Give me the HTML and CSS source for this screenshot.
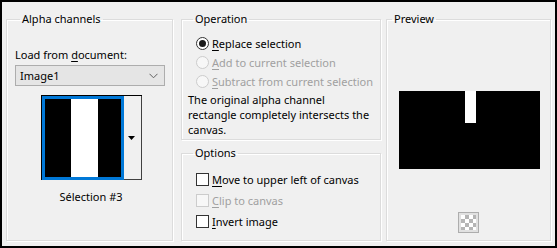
FILE: index.html
```html
<!DOCTYPE html>
<html>
<head>
<meta charset="utf-8">
<link rel="stylesheet" href="styles.css">
</head>
<body>
<div class="dialog">
  <fieldset class="group col1">
    <legend>Alpha channels</legend>
    <div class="label">Load from <u>d</u>ocument:</div>
    <div class="select">
      <span>Image1</span>
      <svg class="chev" width="9" height="6" viewBox="0 0 9 6"><path d="M0.5 0.8 L4.5 4.8 L8.5 0.8" fill="none" stroke="#606060" stroke-width="1"/></svg>
    </div>
    <div class="thumbwrap">
      <div class="thumb">
        <div class="thumbframe"><div class="stripe"></div></div>
        <div class="thumbbtn"><svg width="7" height="4" viewBox="0 0 7 4"><path d="M0 0 H7 L3.5 4 Z" fill="#000"/></svg></div>
      </div>
    </div>
    <div class="caption">Sélection #3</div>
  </fieldset>

  <div class="col2">
    <fieldset class="group op">
      <legend>Operation</legend>
      <div class="radios">
        <div class="row"><span class="radio checked"></span><span><u>R</u>eplace selection</span></div>
        <div class="row dis"><span class="radio"></span><span><u>A</u>dd to current selection</span></div>
        <div class="row dis"><span class="radio"></span><span><u>S</u>ubtract from current selection</span></div>
      </div>
      <div class="desc">The original alpha channel<br>rectangle completely intersects the<br>canvas.</div>
    </fieldset>
    <fieldset class="group opts">
      <legend>Options</legend>
      <div class="checks">
        <div class="row"><span class="check"></span><span><u>M</u>ove to upper left of canvas</span></div>
        <div class="row dis"><span class="check"></span><span><u>C</u>lip to canvas</span></div>
        <div class="row"><span class="check"></span><span><u>I</u>nvert image</span></div>
      </div>
    </fieldset>
  </div>

  <fieldset class="group col3">
    <legend>Preview</legend>
    <div class="prev"><div class="prevbar"></div></div>
    <div class="checker"><div class="checkerin"></div></div>
  </fieldset>
</div>
</body>
</html>
```

FILE: styles.css
```css
html, body { margin: 0; padding: 0; background: #f0f0f0; }
body { font-family: "Noto Sans", "DejaVu Sans", sans-serif; font-size: 11px; color: #000; }
.dialog {
  box-sizing: border-box;
  width: 557px; height: 248px;
  border: 2px solid #000;
  background: #f0f0f0;
  display: flex;
  padding: 9px 4px 5px 4px;
  gap: 8px;
}
u { text-decoration: underline; text-underline-offset: 2px; }
.group {
  margin: 0;
  padding: 0;
  border: 1px solid #dcdcdc;
  box-shadow: inset 1px 1px 0 #fff, 1px 1px 0 #fff;
  min-width: 0;
}
legend {
  line-height: 16px;
  padding: 0 2px;
  margin-left: 5px;
  font-size: 11px;
  white-space: nowrap;
}
.col1 { width: 167px; box-sizing: border-box; padding: 0 7px 0 8px; }
.label { margin-top: 20px; line-height: 16px; }
.select {
  margin-top: 2px;
  height: 21px;
  box-sizing: border-box;
  border: 1px solid #adadad;
  background: #e5e5e5;
  display: flex;
  align-items: center;
  justify-content: space-between;
  padding: 0 6px 0 4px;
}
.chev { display: block; }
.thumbwrap { display: flex; justify-content: center; margin-top: 9px; padding-left: 2px; }
.thumb {
  display: flex;
  border-top: 1px solid #000;
  border-left: 1px solid #000;
}
.thumbframe {
  width: 82px; height: 84px;
  box-sizing: border-box;
  border: 3px solid #0078d7;
  background: #000;
  display: flex;
  padding-left: 26px;
}
.stripe { width: 27px; background: #fff; }
.thumbbtn {
  width: 18px; height: 84px;
  box-sizing: border-box;
  border-right: 1px solid #404040;
  border-bottom: 1px solid #404040;
  display: flex; align-items: center; justify-content: center;
}
.thumbbtn svg { display: block; margin-right: 1px; }
.caption { text-align: center; margin-top: 9px; line-height: 16px; padding-left: 2px; }

.col2 { width: 200px; display: flex; flex-direction: column; gap: 5px; margin-right: -3px; }
.op { padding: 0 4px 2px 6px; }
.radios { margin-top: 7px; padding-left: 8px; }
.row { display: flex; align-items: center; height: 19px; gap: 3px; white-space: nowrap; }
.dis { color: #a0a0a0; }
.radio {
  width: 13px; height: 13px; box-sizing: border-box;
  border-radius: 50%;
  border: 1px solid #cccccc;
  background: #f7f7f7;
  display: flex; align-items: center; justify-content: center;
}
.radio.checked { border-color: #333; background: #fff; }
.radio.checked::after {
  content: ""; width: 7px; height: 7px; border-radius: 50%; background: #1a1a1a;
}
.desc { margin-top: 1px; line-height: 15px; white-space: nowrap; }
.opts { flex: 1; padding: 0 4px 0 6px; }
.checks { margin-top: 8px; padding-left: 8px; }
.checks .row { height: 21px; }
.check {
  width: 13px; height: 13px; box-sizing: border-box;
  border: 1px solid #333; background: #fff;
}
.dis .check { border-color: #cccccc; background: #f7f7f7; }

.col3 { flex: 1; display: flex; flex-direction: column; align-items: center; padding: 0; }
.col3 legend { align-self: flex-start; }
.prev {
  margin-top: 64px;
  margin-left: 2px;
  width: 141px; height: 78px; background: #000;
  display: flex; justify-content: flex-start;
  padding-left: 66px;
  box-sizing: border-box;
}
.prevbar { width: 11px; height: 32px; background: #fff; }
.checker {
  margin-top: 43px;
  width: 21px; height: 21px; box-sizing: border-box;
  border: 1px solid #adadad;
  background: #e1e1e1;
  padding: 2px;
}
.checkerin {
  width: 15px; height: 15px;
  background-color: #fff;
  background-image:
    linear-gradient(45deg, #b5b5b5 25%, transparent 25%, transparent 75%, #b5b5b5 75%),
    linear-gradient(45deg, #b5b5b5 25%, transparent 25%, transparent 75%, #b5b5b5 75%);
  background-size: 8px 8px;
  background-position: 0 0, 4px 4px;
}
```
